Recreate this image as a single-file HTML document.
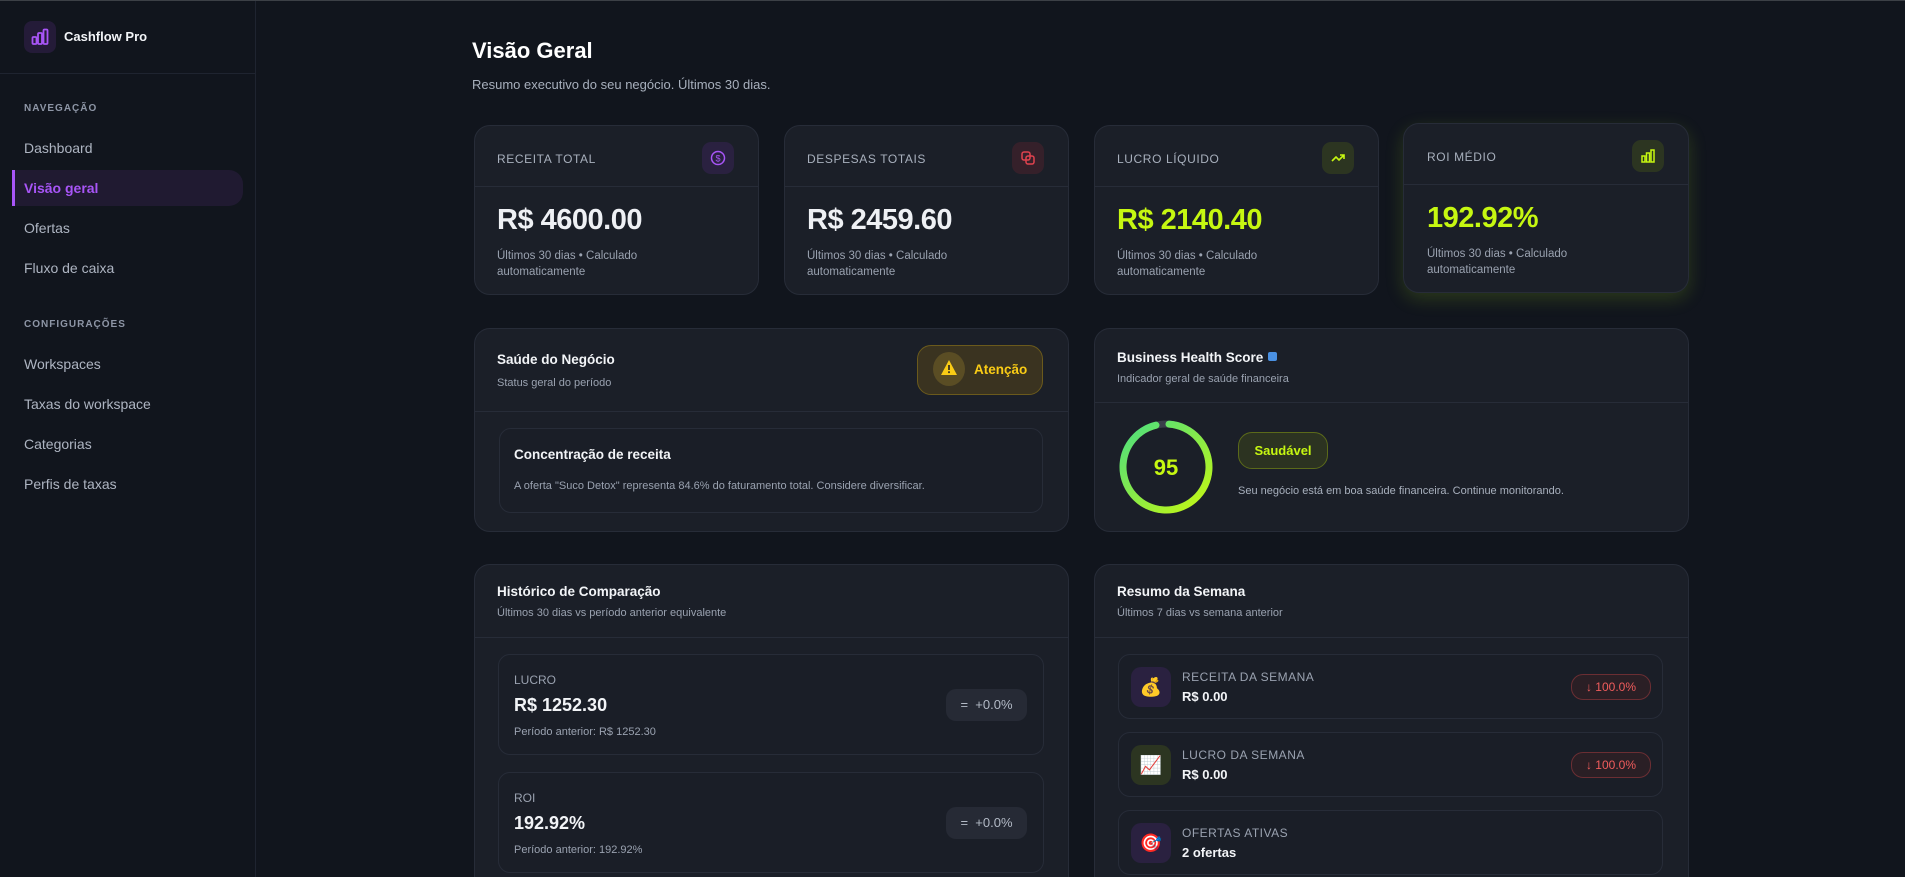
<!DOCTYPE html>
<html><head><meta charset="utf-8"><style>
*{box-sizing:border-box;margin:0;padding:0}
html,body{width:1905px;height:877px;overflow:hidden;background:#11151d}
body{font-family:"Liberation Sans",sans-serif;color:#e8eaee}
#w{position:relative;width:1905px;height:877px;overflow:hidden}
.a{position:absolute}
.topline{left:0;top:0;width:1905px;height:1px;background:#3c4046}
.side{left:0;top:1px;width:256px;height:876px;border-right:1px solid #1f2430;background:#11151d}
.sh{left:0;top:73px;width:255px;height:1px;background:#1f2430}
.sec{font-size:10px;letter-spacing:1px;color:#8e96a6;font-weight:bold;left:24px}
.nav{font-size:14px;color:#aeb5c2;left:24px}
.card{background:#1b1f28;border:1px solid #272c38;border-radius:16px}
.lbl{font-size:12px;letter-spacing:.6px;color:#a8b0bd}
.ib{width:32px;height:32px;border-radius:9px}
.hl{height:1px;background:#272c38}
.val{font-size:29px;font-weight:bold;letter-spacing:-.5px}
.sub{font-size:11.5px;color:#9aa2b0;line-height:16px}
.t{font-size:13.5px;font-weight:bold;color:#f2f4f7}
.s{font-size:11px;color:#9aa2b0}
.box{border:1px solid #272c38;border-radius:12px;background:#1a1e27}
.lime{color:#c6f711}
.badge{background:#262a35;border-radius:10px;color:#b3bac6;font-size:13px;text-align:center;line-height:31px}
.red{border:1px solid #6b2e33;background:#2a1f25;border-radius:12px;color:#f05c5c;font-size:12px;line-height:24px;text-align:center}
</style></head><body><div id="w">
<div class="a topline"></div>
<div class="a side"></div>
<div class="a sh"></div>
<div class="a" style="left:24px;top:21px;width:32px;height:32px;border-radius:8px;background:#241b38"></div>
<svg class="a" style="left:31px;top:28px" width="18" height="18" viewBox="0 0 18 18" fill="none" stroke="#a855f7" stroke-width="1.8"><rect x="1.5" y="9" width="4" height="7" rx="1"/><rect x="7" y="5" width="4" height="11" rx="1"/><rect x="12.5" y="1.5" width="4" height="14.5" rx="1"/></svg>
<div class="a" style="left:64px;top:29px;font-size:13px;font-weight:bold;color:#f2f4f7">Cashflow Pro</div>
<div class="a sec" style="top:103px">NAVEGAÇÃO</div>
<div class="a nav" style="top:140px">Dashboard</div>
<div class="a" style="left:12px;top:170px;width:231px;height:36px;border-radius:0 14px 14px 0;background:#201a31;border-left:3px solid #a855f7"></div>
<div class="a nav" style="top:180px;color:#a855f7;font-weight:bold">Visão geral</div>
<div class="a nav" style="top:220px">Ofertas</div>
<div class="a nav" style="top:260px">Fluxo de caixa</div>
<div class="a sec" style="top:319px">CONFIGURAÇÕES</div>
<div class="a nav" style="top:356px">Workspaces</div>
<div class="a nav" style="top:396px">Taxas do workspace</div>
<div class="a nav" style="top:436px">Categorias</div>
<div class="a nav" style="top:476px">Perfis de taxas</div>

<div class="a" style="left:472px;top:38px;font-size:22px;font-weight:bold;color:#fff">Visão Geral</div>
<div class="a" style="left:472px;top:77px;font-size:13px;color:#a8b0bd">Resumo executivo do seu negócio. Últimos 30 dias.</div>

<div class="a card" style="left:474px;top:125px;width:285px;height:170px"></div>
<div class="a hl" style="left:475px;top:186px;width:283px"></div>
<div class="a lbl" style="left:497px;top:152px">RECEITA TOTAL</div>
<div class="a ib" style="left:702px;top:142px;background:#2a2140"></div>
<svg class="a" style="left:710px;top:150px" width="16" height="16" viewBox="0 0 16 16" fill="none" stroke="#a855f7" stroke-width="1.5"><circle cx="8" cy="8" r="6.5"/><text x="8" y="11.5" font-size="9" fill="#a855f7" stroke="none" text-anchor="middle" font-family="Liberation Sans">$</text></svg>
<div class="a val" style="left:497px;top:204px;color:#eef0f4">R$ 4600.00</div>
<div class="a sub" style="left:497px;top:248px">Últimos 30 dias • Calculado<br>automaticamente</div>

<div class="a card" style="left:784px;top:125px;width:285px;height:170px"></div>
<div class="a hl" style="left:785px;top:186px;width:283px"></div>
<div class="a lbl" style="left:807px;top:152px">DESPESAS TOTAIS</div>
<div class="a ib" style="left:1012px;top:142px;background:#35202a"></div>
<svg class="a" style="left:1020px;top:150px" width="16" height="16" viewBox="0 0 16 16" fill="none" stroke="#e0424e" stroke-width="1.5"><rect x="2" y="2" width="8" height="8" rx="2"/><rect x="6" y="6" width="8" height="8" rx="2"/></svg>
<div class="a val" style="left:807px;top:204px;color:#eef0f4">R$ 2459.60</div>
<div class="a sub" style="left:807px;top:248px">Últimos 30 dias • Calculado<br>automaticamente</div>

<div class="a card" style="left:1094px;top:125px;width:285px;height:170px"></div>
<div class="a hl" style="left:1095px;top:186px;width:283px"></div>
<div class="a lbl" style="left:1117px;top:152px">LUCRO LÍQUIDO</div>
<div class="a ib" style="left:1322px;top:142px;background:#2c3521"></div>
<svg class="a" style="left:1330px;top:150px" width="16" height="16" viewBox="0 0 16 16" fill="none" stroke="#c6f711" stroke-width="1.6"><path d="M2 11l4-4 3 3 5-5M10 5h4v4"/></svg>
<div class="a val lime" style="left:1117px;top:204px">R$ 2140.40</div>
<div class="a sub" style="left:1117px;top:248px">Últimos 30 dias • Calculado<br>automaticamente</div>

<div class="a card" style="left:1403px;top:123px;width:286px;height:170px;box-shadow:0 6px 18px rgba(160,220,20,.18)"></div>
<div class="a hl" style="left:1404px;top:184px;width:284px"></div>
<div class="a lbl" style="left:1427px;top:150px">ROI MÉDIO</div>
<div class="a ib" style="left:1632px;top:140px;background:#2c3521"></div>
<svg class="a" style="left:1640px;top:148px" width="16" height="16" viewBox="0 0 16 16" fill="none" stroke="#c6f711" stroke-width="1.5"><rect x="2" y="8" width="3" height="6"/><rect x="6.5" y="5" width="3" height="9"/><rect x="11" y="2" width="3" height="12"/></svg>
<div class="a val lime" style="left:1427px;top:202px">192.92%</div>
<div class="a sub" style="left:1427px;top:246px">Últimos 30 dias • Calculado<br>automaticamente</div>

<div class="a card" style="left:474px;top:328px;width:595px;height:204px"></div>
<div class="a hl" style="left:475px;top:411px;width:593px"></div>
<div class="a t" style="left:497px;top:352px">Saúde do Negócio</div>
<div class="a s" style="left:497px;top:377px">Status geral do período</div>
<div class="a" style="left:917px;top:345px;width:126px;height:50px;border:1px solid #6b5a1c;background:#3a3320;border-radius:14px"></div>
<div class="a" style="left:933px;top:352px;width:32px;height:34px;border-radius:50%;background:#5a4d24"></div>
<svg class="a" style="left:940px;top:359px" width="18" height="17" viewBox="0 0 18 17"><path d="M9 1L17 16H1z" fill="#facc15"/><rect x="8.1" y="6" width="1.8" height="5" fill="#3a3320"/><rect x="8.1" y="12.3" width="1.8" height="1.8" fill="#3a3320"/></svg>
<div class="a" style="left:974px;top:362px;font-size:13.5px;font-weight:bold;color:#facc15">Atenção</div>
<div class="a box" style="left:499px;top:428px;width:544px;height:85px"></div>
<div class="a t" style="left:514px;top:447px">Concentração de receita</div>
<div class="a s" style="left:514px;top:480px">A oferta "Suco Detox" representa 84.6% do faturamento total. Considere diversificar.</div>

<div class="a card" style="left:1094px;top:328px;width:595px;height:204px"></div>
<div class="a hl" style="left:1095px;top:402px;width:593px"></div>
<div class="a t" style="left:1117px;top:350px">Business Health Score</div>
<div class="a" style="left:1268px;top:352px;width:9px;height:9px;background:#4a90e2;border-radius:2px"></div>
<div class="a s" style="left:1117px;top:373px">Indicador geral de saúde financeira</div>
<svg class="a" style="left:1117px;top:418px" width="98" height="98" viewBox="0 0 98 98"><defs><linearGradient id="g" x1="1" y1="0" x2="0" y2="1"><stop offset="0" stop-color="#4ade80"/><stop offset="1" stop-color="#c6f711"/></linearGradient></defs><circle cx="49" cy="49" r="43" fill="none" stroke="#3a3f4a" stroke-width="7"/><circle cx="49" cy="49" r="43" fill="none" stroke="url(#g)" stroke-width="7" stroke-linecap="round" stroke-dasharray="256.6 270.2" transform="rotate(-86 49 49)"/></svg>
<div class="a lime" style="left:1117px;top:455px;width:98px;text-align:center;font-size:22px;font-weight:bold">95</div>
<div class="a" style="left:1238px;top:432px;width:90px;height:37px;border:1px solid #5b6a1a;background:#2c3321;border-radius:14px;text-align:center;line-height:35px;font-size:13px;font-weight:bold;color:#c6f711">Saudável</div>
<div class="a s" style="left:1238px;top:485px;color:#a8b0bd">Seu negócio está em boa saúde financeira. Continue monitorando.</div>

<div class="a card" style="left:474px;top:564px;width:595px;height:340px"></div>
<div class="a hl" style="left:475px;top:637px;width:593px"></div>
<div class="a t" style="left:497px;top:584px">Histórico de Comparação</div>
<div class="a s" style="left:497px;top:607px">Últimos 30 dias vs período anterior equivalente</div>
<div class="a box" style="left:498px;top:654px;width:546px;height:101px"></div>
<div class="a s" style="left:514px;top:673px;font-size:12px">LUCRO</div>
<div class="a" style="left:514px;top:695px;font-size:18px;font-weight:bold;color:#f2f4f7">R$ 1252.30</div>
<div class="a s" style="left:514px;top:726px">Período anterior: R$ 1252.30</div>
<div class="a badge" style="left:946px;top:689px;width:81px;height:32px">= &nbsp;+0.0%</div>
<div class="a box" style="left:498px;top:772px;width:546px;height:101px"></div>
<div class="a s" style="left:514px;top:791px;font-size:12px">ROI</div>
<div class="a" style="left:514px;top:813px;font-size:18px;font-weight:bold;color:#f2f4f7">192.92%</div>
<div class="a s" style="left:514px;top:844px">Período anterior: 192.92%</div>
<div class="a badge" style="left:946px;top:807px;width:81px;height:32px">= &nbsp;+0.0%</div>

<div class="a card" style="left:1094px;top:564px;width:595px;height:340px"></div>
<div class="a hl" style="left:1095px;top:637px;width:593px"></div>
<div class="a t" style="left:1117px;top:584px">Resumo da Semana</div>
<div class="a s" style="left:1117px;top:607px">Últimos 7 dias vs semana anterior</div>

<div class="a box" style="left:1118px;top:654px;width:545px;height:65px"></div>
<div class="a" style="left:1131px;top:667px;width:40px;height:40px;border-radius:10px;background:#2a2140;text-align:center;line-height:40px;font-size:18px">💰</div>
<div class="a s" style="left:1182px;top:670px;font-size:12px;letter-spacing:.5px">RECEITA DA SEMANA</div>
<div class="a" style="left:1182px;top:689px;font-size:13px;font-weight:bold;color:#f2f4f7">R$ 0.00</div>
<div class="a red" style="left:1571px;top:674px;width:80px;height:26px">↓ 100.0%</div>

<div class="a box" style="left:1118px;top:732px;width:545px;height:65px"></div>
<div class="a" style="left:1131px;top:745px;width:40px;height:40px;border-radius:10px;background:#2c3521;text-align:center;line-height:40px;font-size:18px">📈</div>
<div class="a s" style="left:1182px;top:748px;font-size:12px;letter-spacing:.5px">LUCRO DA SEMANA</div>
<div class="a" style="left:1182px;top:767px;font-size:13px;font-weight:bold;color:#f2f4f7">R$ 0.00</div>
<div class="a red" style="left:1571px;top:752px;width:80px;height:26px">↓ 100.0%</div>

<div class="a box" style="left:1118px;top:810px;width:545px;height:65px"></div>
<div class="a" style="left:1131px;top:823px;width:40px;height:40px;border-radius:10px;background:#2a2140;text-align:center;line-height:40px;font-size:18px">🎯</div>
<div class="a s" style="left:1182px;top:826px;font-size:12px;letter-spacing:.5px">OFERTAS ATIVAS</div>
<div class="a" style="left:1182px;top:845px;font-size:13px;font-weight:bold;color:#f2f4f7">2 ofertas</div>
</div></body></html>
